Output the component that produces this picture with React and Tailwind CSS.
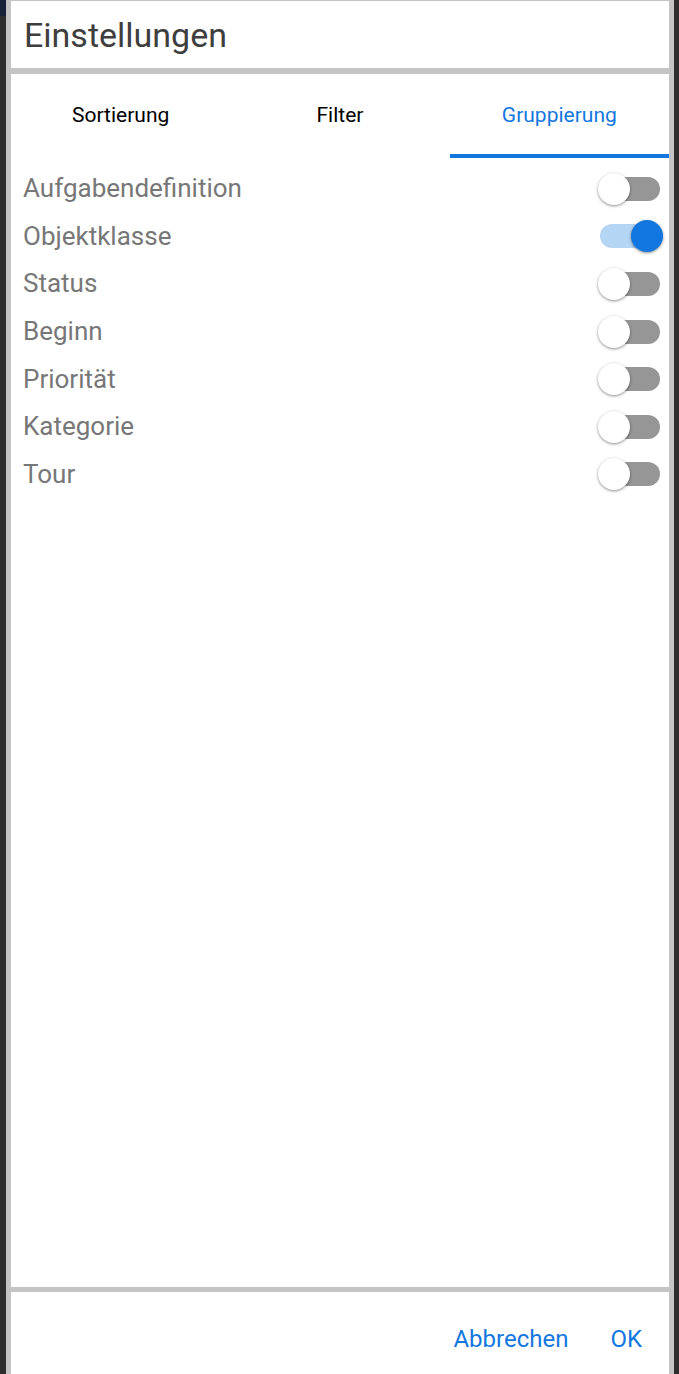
import { useState } from 'react'

const rows = [
  { id: 'aufgabe', label: 'Aufgabendefinition', on: false },
  { id: 'objekt', label: 'Objektklasse', on: true },
  { id: 'status', label: 'Status', on: false },
  { id: 'beginn', label: 'Beginn', on: false },
  { id: 'prio', label: 'Priorität', on: false },
  { id: 'kat', label: 'Kategorie', on: false },
  { id: 'tour', label: 'Tour', on: false },
]

function Toggle({ on, onClick }) {
  return (
    <button onClick={onClick} className="relative w-[68px] h-[34px] flex items-center">
      <span className={`ml-[4px] w-[60px] h-[24px] rounded-full ${on ? 'bg-[#b5d5f5]' : 'bg-[#969696]'}`} />
      <span
        className={`absolute top-[1px] w-[32px] h-[32px] rounded-full shadow-[0_1px_3px_rgba(0,0,0,0.45)]
          ${on ? 'left-[35px] bg-[#1176e0]' : 'left-[2px] bg-white'}`}
      />
    </button>
  )
}

export default function App() {
  const [tab, setTab] = useState('gruppierung')
  const [state, setState] = useState(() => Object.fromEntries(rows.map(r => [r.id, r.on])))

  const tabs = [
    { id: 'sortierung', label: 'Sortierung' },
    { id: 'filter', label: 'Filter' },
    { id: 'gruppierung', label: 'Gruppierung' },
  ]

  return (
    <div className="h-[1374px] w-[679px] flex bg-[#2d2d2d] font-['Roboto',sans-serif]">
      <div className="w-[6px] flex flex-col">
        <div className="h-[16px] bg-[#18233a]" />
        <div className="flex-1" />
      </div>
      <div className="w-[668px] flex flex-col bg-[#c4c4c4] px-[5px] pt-[1px]">
        <header className="h-[67px] bg-white flex items-center px-[13px]">
          <h1 className="text-[34px] text-[#3e3e3e] leading-none">Einstellungen</h1>
        </header>
        <div className="h-[6px]" />
        <main className="flex-1 bg-white flex flex-col">
          <div className="flex h-[84px]">
            {tabs.map(t => (
              <button
                key={t.id}
                onClick={() => setTab(t.id)}
                className={`flex-1 flex items-center justify-center text-[21px] pt-[3px] border-b-4
                  ${tab === t.id ? 'text-[#1377e0] border-[#1377e0]' : 'text-black border-transparent'}`}
              >
                {t.label}
              </button>
            ))}
          </div>
          <div className="flex flex-col pt-[7px] pl-[12px] pr-[5px]">
            {rows.map(r => (
              <div key={r.id} className="flex items-center justify-between h-[47.6px]">
                <span className="text-[26px] text-[#777777]">{r.label}</span>
                <Toggle on={state[r.id]} onClick={() => setState(s => ({ ...s, [r.id]: !s[r.id] }))} />
              </div>
            ))}
          </div>
        </main>
        <div className="h-[5px]" />
        <footer className="h-[82px] bg-white flex items-center justify-end gap-[42px] pr-[27px] pt-[12px]">
          <button className="text-[24px] text-[#1377e0]">Abbrechen</button>
          <button className="text-[24px] text-[#1377e0]">OK</button>
        </footer>
      </div>
      <div className="w-[5px]" />
    </div>
  )
}
